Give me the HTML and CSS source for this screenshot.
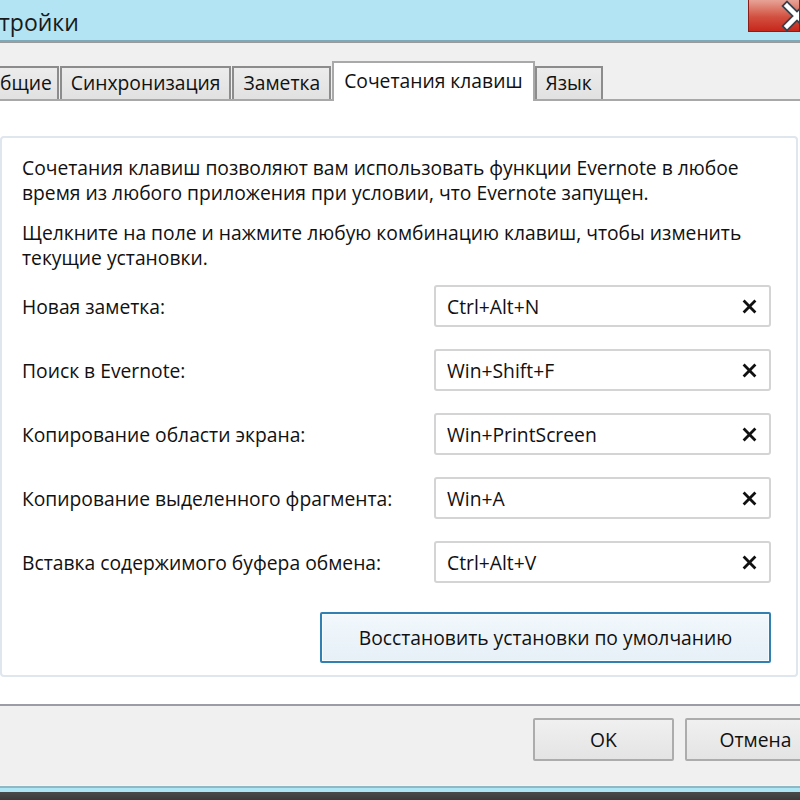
FILE: index.html
```html
<!DOCTYPE html>
<html lang="ru">
<head>
    <meta charset="UTF-8">
    <title>Настройки</title>
    <link rel="stylesheet" href="styles.css">
</head>
<body>
    <div class="window">
        <div class="titlebar">
            <span class="title">тройки</span>
            <div class="close-btn">
                <svg width="50" height="31" viewBox="0 0 50 31">
                    <path d="M38 6 L58 26 M58 6 L38 26" stroke="#39414c" stroke-width="8" stroke-linecap="square" fill="none"/>
                    <path d="M38 6 L58 26 M58 6 L38 26" stroke="#ffffff" stroke-width="4.5" stroke-linecap="square" fill="none"/>
                </svg>
            </div>
        </div>

        <div class="tabs">
            <div class="tab first">бщие</div>
            <div class="tab">Синхронизация</div>
            <div class="tab">Заметка</div>
            <div class="tab active">Сочетания клавиш</div>
            <div class="tab">Язык</div>
        </div>

        <div class="page">
            <div class="group">
                <p>Сочетания клавиш позволяют вам использовать функции Evernote в любое время из любого приложения при условии, что Evernote запущен.</p>
                <p>Щелкните на поле и нажмите любую комбинацию клавиш, чтобы изменить текущие установки.</p>

                <div class="shortcuts">
                    <label>Новая заметка:</label>
                    <div class="field"><span>Ctrl+Alt+N</span><svg class="clear" viewBox="0 0 14 14"><path d="M1.5 1.5 L12.5 12.5 M12.5 1.5 L1.5 12.5"/></svg></div>

                    <label>Поиск в Evernote:</label>
                    <div class="field"><span>Win+Shift+F</span><svg class="clear" viewBox="0 0 14 14"><path d="M1.5 1.5 L12.5 12.5 M12.5 1.5 L1.5 12.5"/></svg></div>

                    <label>Копирование области экрана:</label>
                    <div class="field"><span>Win+PrintScreen</span><svg class="clear" viewBox="0 0 14 14"><path d="M1.5 1.5 L12.5 12.5 M12.5 1.5 L1.5 12.5"/></svg></div>

                    <label>Копирование выделенного фрагмента:</label>
                    <div class="field"><span>Win+A</span><svg class="clear" viewBox="0 0 14 14"><path d="M1.5 1.5 L12.5 12.5 M12.5 1.5 L1.5 12.5"/></svg></div>

                    <label>Вставка содержимого буфера обмена:</label>
                    <div class="field"><span>Ctrl+Alt+V</span><svg class="clear" viewBox="0 0 14 14"><path d="M1.5 1.5 L12.5 12.5 M12.5 1.5 L1.5 12.5"/></svg></div>
                </div>

                <div class="restore-row">
                    <button class="restore">Восстановить установки по умолчанию</button>
                </div>
            </div>
        </div>

        <div class="footer">
            <button class="btn">OK</button>
            <button class="btn">Отмена</button>
        </div>
        <div class="frame-bottom"></div>
    </div>
</body>
</html>
```

FILE: styles.css
```css
html, body {
    margin: 0;
    padding: 0;
    overflow: hidden;
}
body {
    font-family: "Open Sans", "Noto Sans", "DejaVu Sans", sans-serif;
    font-size: 19.3px;
    color: #111;
    background-color: #f0f0f0;
    width: 800px;
    height: 800px;
}
.window {
    display: flex;
    flex-direction: column;
    height: 800px;
}

/* заголовок окна */
.titlebar {
    height: 40px;
    background-color: #b3e4f3;
    border-bottom: 2px solid #7fa9b6;
    display: flex;
    justify-content: space-between;
    align-items: flex-start;
    flex-shrink: 0;
}
.title {
    font-size: 23px;
    line-height: 40px;
    padding-top: 2px;
    margin-left: -1px;
    color: #1a1a1a;
}
.close-btn {
    width: 50px;
    height: 31px;
    flex-shrink: 0;
    border: 1px solid #8a1d16;
    border-top: none;
    background: linear-gradient(#e7a396, #d2503f 55%, #c6271b);
    overflow: hidden;
}
.close-btn svg {
    display: block;
}

/* вкладки */
.tabs {
    display: flex;
    align-items: flex-end;
    height: 56px;
    margin-left: -5px;
    border-top: 1px solid #9a9a9a;
    border-bottom: 2px solid #a8a8a8;
    background-color: #f0f0f0;
    flex-shrink: 0;
}
.tab {
    height: 31px;
    line-height: 30px;
    padding: 0 9px;
    margin-right: 1px;
    border: 2px solid #8c8c8c;
    border-bottom: none;
    background: linear-gradient(#ececec, #e1e1e1);
    white-space: nowrap;
}
.tab.first {
    padding: 0 5px 0 3px;
}
.tab.active {
    height: 38px;
    line-height: 36px;
    padding: 0 10px;
    margin-bottom: -2px;
    margin-right: 0;
    border-color: #a9a9a9;
    background: #fff;
}

/* страница вкладки */
.page {
    flex: 1;
    background-color: #fff;
    padding: 35px 2px 27px 0;
    border-bottom: 2px solid #9c9ca7;
}
.group {
    height: 100%;
    box-sizing: border-box;
    border: 2px solid #dfe6ee;
    border-radius: 4px;
    padding: 17px 25px 0 20px;
}
.group p {
    margin: 0 0 15px 0;
    line-height: 25px;
}
.shortcuts {
    display: grid;
    grid-template-columns: 1fr 337px;
    row-gap: 22px;
    align-items: center;
}
.field {
    height: 42px;
    box-sizing: border-box;
    border: 2px solid #d4d4d4;
    border-radius: 3px;
    padding: 0 12px 0 11px;
    display: flex;
    justify-content: space-between;
    align-items: center;
}
.clear {
    width: 15px;
    height: 15px;
}
.clear path {
    stroke: #111;
    stroke-width: 2.6;
    fill: none;
}
.restore-row {
    display: flex;
    justify-content: flex-end;
    margin-top: 29px;
}
button {
    font-family: inherit;
    font-size: 19.3px;
    color: #111;
}
.restore {
    width: 451px;
    height: 51px;
    border: 2px solid #3280b2;
    border-radius: 2px;
    background: linear-gradient(#f2f8fc, #e6f0f7);
    box-shadow: inset 0 0 0 1px #f6fbfe;
}

/* нижняя панель */
.footer {
    height: 67px;
    display: flex;
    justify-content: flex-end;
    align-items: flex-start;
    gap: 11px;
    padding-top: 12px;
    margin-right: -26px;
    background-color: #f0f0f0;
    flex-shrink: 0;
}
.btn {
    width: 141px;
    height: 43px;
    border: 2px solid #acacac;
    border-radius: 2px;
    background: linear-gradient(#f0f0f0, #e4e4e4);
}
.frame-bottom {
    height: 15px;
    flex-shrink: 0;
    background: linear-gradient(#f4f4f4 0, #f4f4f4 1px, #8fb8c4 1px, #8fb8c4 3px, #aee6f6 3px, #aee6f6 7px, #4a4a4a 7px, #3a3a3a);
}
```
